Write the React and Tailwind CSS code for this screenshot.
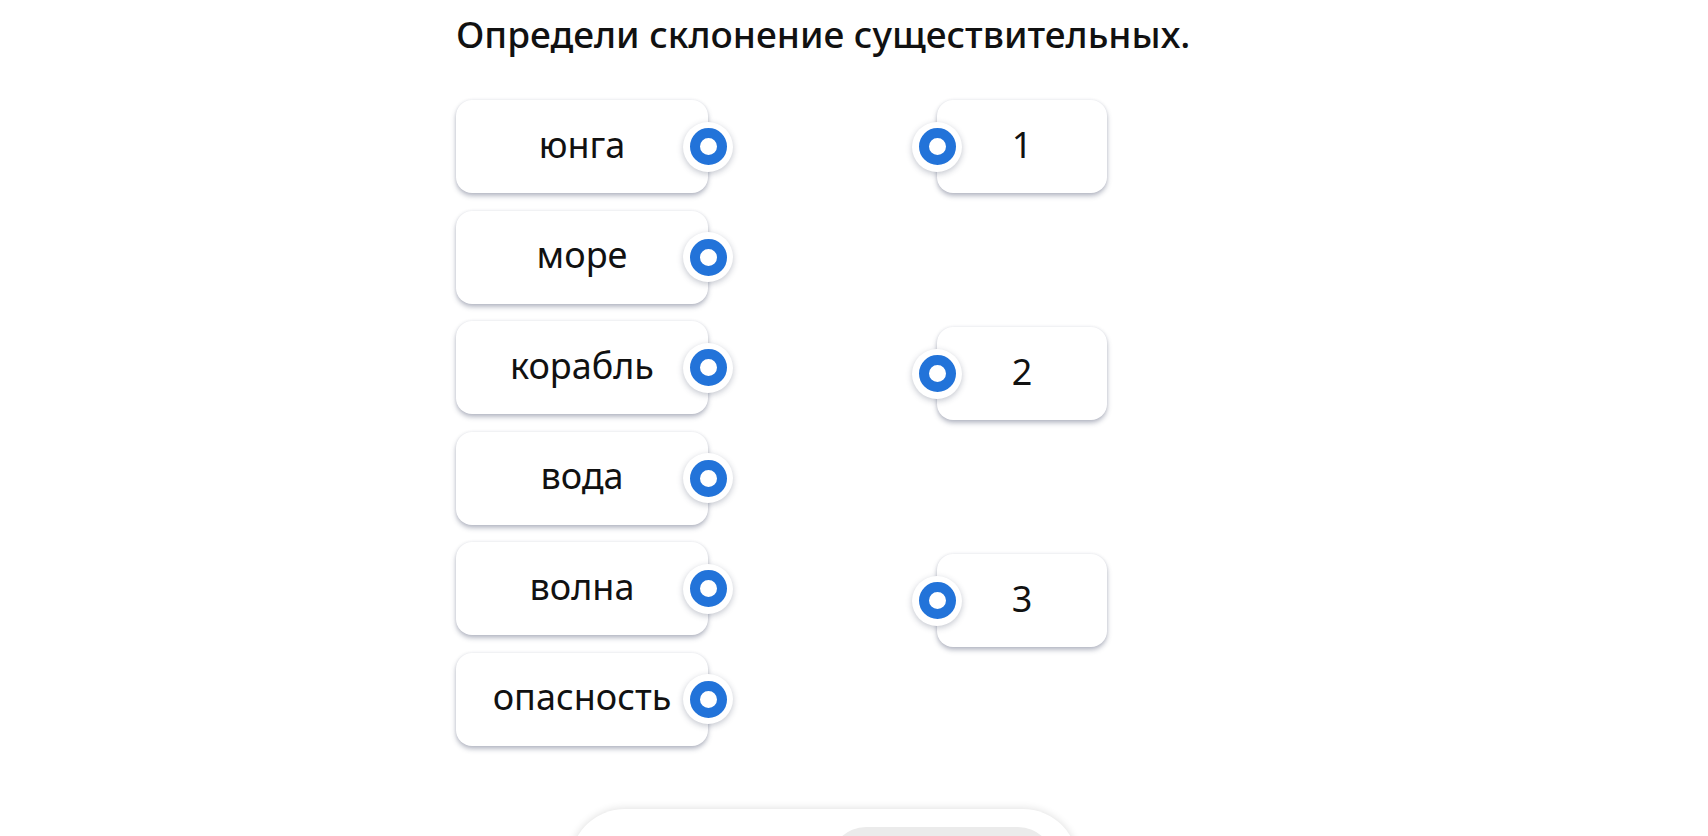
// matching task: noun declension
import React from "react";

const words = ["юнга", "море", "корабль", "вода", "волна", "опасность"];
const groups = ["1", "2", "3"];

const Dot = ({ className = "" }) => (
  <div
    className={
      "absolute top-1/2 -translate-y-1/2 w-[50px] h-[50px] rounded-full bg-white flex items-center justify-center shadow-[0_2px_6px_rgba(40,50,80,0.28)] " +
      className
    }
  >
    <div className="w-[37px] h-[37px] rounded-full border-[10px] border-[#2273d9] bg-white" />
  </div>
);

const Card = ({ children, width, side }) => (
  <div
    className={
      "relative h-[93px] rounded-[16px] bg-white flex items-center justify-center text-[36px] text-[#111] shadow-[0_3px_5px_rgba(50,60,90,0.34),0_0_3px_rgba(50,60,90,0.1)] " +
      width
    }
  >
    <span className="leading-none pb-[4px]">{children}</span>
    <Dot className={side === "right" ? "right-0 translate-x-1/2" : "left-0 -translate-x-1/2"} />
  </div>
);

export default function App() {
  return (
    <div
      className="h-[836px] overflow-hidden bg-white pl-[456px]"
      style={{ fontFamily: '"Noto Sans", "Open Sans", sans-serif' }}
    >
      <div className="w-[730px]">
        <h1 className="pt-[12px] whitespace-nowrap text-[37px] leading-[44px] font-medium text-[#111]">
          Определи склонение существительных.
        </h1>

        <div className="mt-[44px] flex">
          <div className="flex flex-col gap-[17.6px]">
            {words.map((w) => (
              <Card key={w} width="w-[252px]" side="right">
                {w}
              </Card>
            ))}
          </div>
          <div className="ml-[229px] flex flex-col gap-[134px]">
            {groups.map((g) => (
              <Card key={g} width="w-[170px]" side="left">
                {g}
              </Card>
            ))}
          </div>
        </div>

        <div className="mt-[63px] ml-[114px] w-[508px] h-[110px] rounded-[56px] bg-white flex justify-end pt-[18px] pr-[24px] shadow-[0_0_8px_rgba(0,0,0,0.14)]">
          <div className="w-[224px] h-[72px] rounded-[36px] bg-[#ebebeb]" />
        </div>
      </div>
    </div>
  );
}
